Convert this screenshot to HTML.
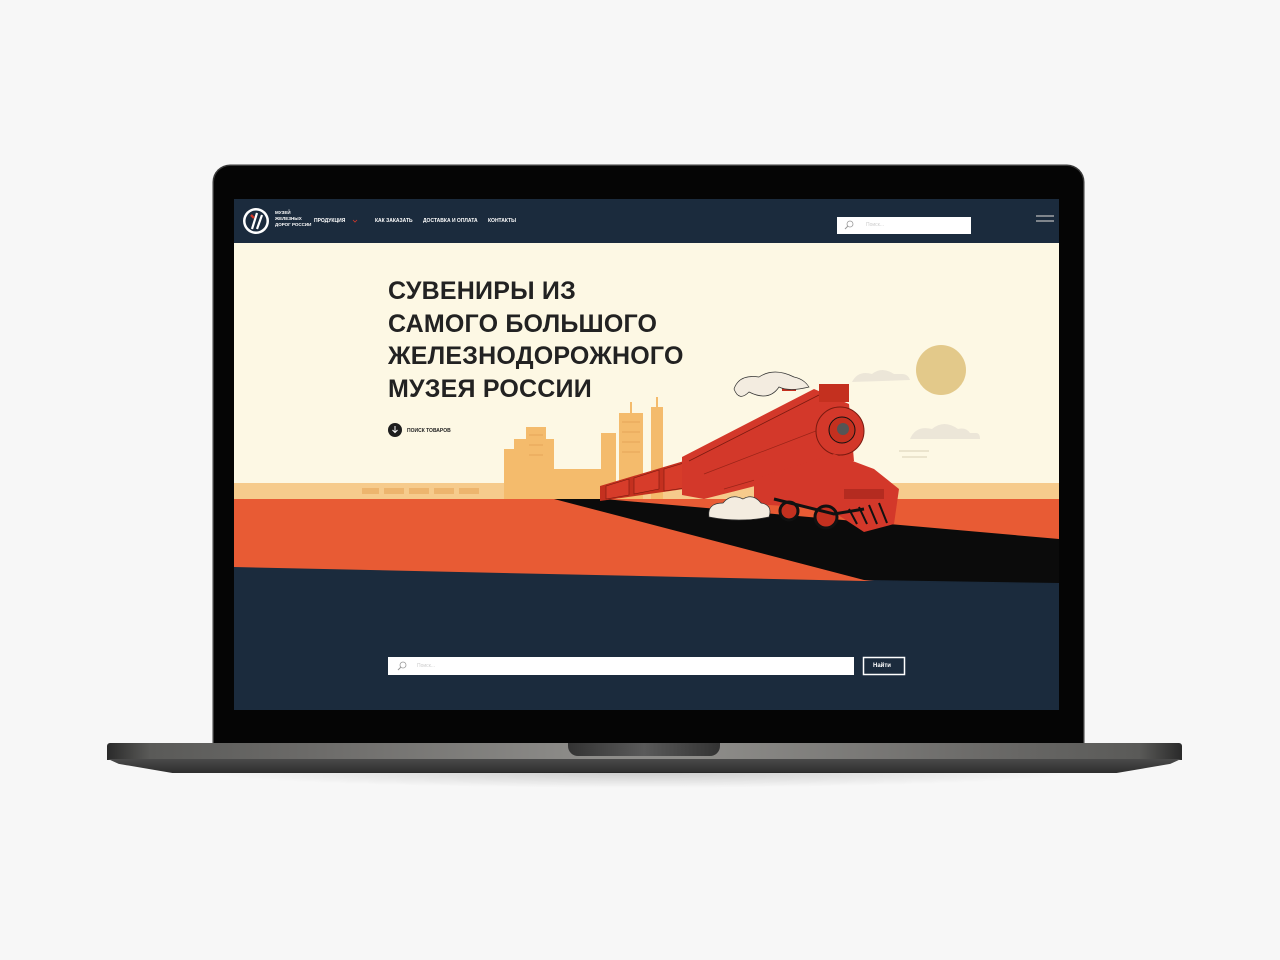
<!DOCTYPE html>
<html><head><meta charset="utf-8"><style>
body{margin:0;width:1280px;height:960px;background:#f7f7f7;position:relative;overflow:hidden;font-family:"Liberation Sans","DejaVu Sans",sans-serif}
.lid{position:absolute;left:214px;top:166px;width:869px;height:578px;background:#050505;border-radius:16px 16px 0 0;box-shadow:0 0 0 1.5px #3a3a3a}
.screen{position:absolute;left:234px;top:199px;width:825px;height:511px;background:#1b2b3d;overflow:hidden}
.nav{position:absolute;left:0;top:0;width:825px;height:44px}
.nav span{position:absolute;top:19px;color:#fff;font-size:5px;font-weight:bold}
.base{position:absolute;left:107px;top:743px;width:1075px;height:17px;background:linear-gradient(90deg,#2a2a2a 0%,#5a5a58 4%,#6d6c6a 20%,#8e8d8a 45%,#8e8d8a 55%,#6d6c6a 80%,#5a5a58 96%,#2a2a2a 100%);border-radius:3px 3px 0 0}
.base2{position:absolute;left:108px;top:759px;width:1073px;height:14px;background:linear-gradient(#4a4a4a,#2e2e2e);clip-path:polygon(0 0,100% 0,99% 35%,94% 100%,6% 100%,1% 35%)}
.notch{position:absolute;left:568px;top:743px;width:152px;height:13px;background:linear-gradient(90deg,#333,#5a5a5a 50%,#333);border-radius:0 0 10px 10px}
.shadow{position:absolute;left:200px;top:772px;width:880px;height:16px;background:radial-gradient(ellipse at 50% 0,rgba(0,0,0,.18),rgba(0,0,0,0) 70%)}
h1{position:absolute;left:154px;top:76px;margin:0;font-size:25px;line-height:32.5px;color:#222;font-weight:900;letter-spacing:0.2px}
</style></head><body>
<div class="lid"></div>
<div class="screen">
<svg width="825" height="511" style="position:absolute;left:0;top:0">
<rect x="0" y="44" width="825" height="290" fill="#fdf8e4"/>
<rect x="0" y="284" width="825" height="16" fill="#f6cb8c"/>
<g fill="#edb56e"><rect x="128" y="289" width="17" height="6"/><rect x="150" y="289" width="20" height="6"/><rect x="175" y="289" width="20" height="6"/><rect x="200" y="289" width="20" height="6"/><rect x="225" y="289" width="20" height="6"/></g>
<g fill="#f4bb6c"><rect x="270" y="250" width="20" height="50"/><rect x="292" y="228" width="20" height="72"/><rect x="280" y="240" width="40" height="60"/><rect x="318" y="270" width="55" height="30"/><rect x="367" y="234" width="15" height="66"/><rect x="385" y="214" width="24" height="86"/><rect x="417" y="208" width="12" height="92"/><rect x="396" y="203" width="2" height="12"/><rect x="422" y="198" width="2" height="12"/></g>
<g fill="#e8a65a" opacity=".5"><rect x="295" y="235" width="14" height="2"/><rect x="295" y="245" width="14" height="2"/><rect x="295" y="255" width="14" height="2"/><rect x="388" y="222" width="18" height="2"/><rect x="388" y="232" width="18" height="2"/><rect x="388" y="242" width="18" height="2"/><rect x="388" y="252" width="18" height="2"/></g>
<path d="M0 300H825V363L630 382H0Z" fill="#e85b34"/>
<path d="M0 368L630 382L825 385V511H0Z" fill="#1b2b3d"/>
<path d="M320 300L370 300L825 340L825 384L630 381Z" fill="#0b0b0b"/>
<circle cx="707" cy="171" r="25" fill="#e3c98a"/>
<path d="M618 183q6-12 20-8q10-8 22 0h8q6 0 8 6z" fill="#ece6d8"/>
<path d="M676 240q6-14 22-10q12-10 26 0q8-2 12 4h6q4 0 4 6z" fill="#ece6d8"/>
<path d="M665 252h30M668 258h25" stroke="#d9cfb6" stroke-width="1"/>
<path d="M366 287L450 262L450 290L366 302Z" fill="#c4301f"/>
<path d="M372 287L395 280V296L372 300Z M400 279L425 271V290L400 295Z M430 270L450 264V289L430 292Z" fill="#d73c2a" stroke="#7a1a10" stroke-width=".6"/>
<path d="M455 260L500 248V292L455 296Z" fill="#c4301f" stroke="#7a1a10" stroke-width=".6"/>
<path d="M448 258L580 190L615 205L620 262L470 300L448 296Z" fill="#d3382a"/>
<path d="M455 262L585 196" stroke="#7a1a10" stroke-width=".8"/>
<path d="M470 275L600 225M490 290L610 255" stroke="#9a2418" stroke-width=".7"/>
<rect x="585" y="185" width="30" height="18" fill="#c4301f"/>
<rect x="548" y="180" width="14" height="12" fill="#c4301f"/>
<circle cx="606" cy="232" r="24" fill="#d3382a" stroke="#7a1a10" stroke-width="1"/>
<circle cx="608" cy="231" r="13" fill="#c4301f" stroke="#111" stroke-width="1"/>
<circle cx="609" cy="230" r="6" fill="#555"/>
<path d="M600 255L640 270L665 290L660 325L630 333L595 310L520 305L520 280Z" fill="#d3382a"/>
<path d="M610 290h40v10h-40z" fill="#b42b20"/>
<path d="M615 310l8 15M625 308l8 17M635 306l8 19M645 304l8 20" stroke="#111" stroke-width="2"/>
<circle cx="592" cy="318" r="11" fill="#c4301f" stroke="#111" stroke-width="3"/>
<circle cx="555" cy="312" r="9" fill="#c4301f" stroke="#111" stroke-width="3"/>
<path d="M540 300l60 15l30 -5" stroke="#111" stroke-width="3" fill="none"/>
<path d="M500 190q5-15 25-12q15-10 35 0q10 2 15 10q-20 5-30 0q-10 15-30 5q-10 10-15-3z" fill="#f3ece0" stroke="#333" stroke-width=".7"/>
<path d="M475 318q-2-14 14-14q8-10 20-4q10-6 18 4q12 2 8 14q-30 6-60 0z" fill="#f3ece0" stroke="#333" stroke-width=".7"/>
<circle cx="22" cy="22" r="13" fill="#fff"/><circle cx="22" cy="22" r="10.5" fill="#1b2b3d"/>
<path d="M18 30L23 14M23 30L28 16" stroke="#fff" stroke-width="2.2"/><path d="M17 16l3 3" stroke="#d3382a" stroke-width="2.5"/>
<rect x="603" y="18" width="134" height="17" fill="#fff"/>
<circle cx="616" cy="25" r="3" fill="none" stroke="#999" stroke-width=".8"/><path d="M614 27l-3 3" stroke="#999"/>
<path d="M802 17h18M802 22h18" stroke="#bbb" stroke-width="1.2"/>
<path d="M119 21l2 2l2-2" stroke="#d3382a" stroke-width=".8" fill="none"/>
<circle cx="161" cy="231" r="7" fill="#1e1e1e"/><path d="M161 227v6M158.5 231l2.5 2.5l2.5-2.5" stroke="#fff" stroke-width="1" fill="none"/>
<rect x="154" y="458" width="466" height="18" fill="#fff"/>
<circle cx="169" cy="466" r="3" fill="none" stroke="#999" stroke-width=".8"/><path d="M167 468l-3 3" stroke="#999"/>
<rect x="629.5" y="458.5" width="41" height="17" fill="none" stroke="#fff" stroke-width="1.5"/>
</svg>
<div class="nav">
<span style="left:41px;top:11px;font-size:4.5px;line-height:6px">МУЗЕЙ<br>ЖЕЛЕЗНЫХ<br>ДОРОГ РОССИИ</span>
<span style="left:80px">ПРОДУКЦИЯ</span>
<span style="left:141px">КАК ЗАКАЗАТЬ</span>
<span style="left:189px">ДОСТАВКА И ОПЛАТА</span>
<span style="left:254px">КОНТАКТЫ</span>
<span style="left:632px;top:23px;color:#ccc;font-weight:normal">Поиск...</span>
</div>
<h1>СУВЕНИРЫ ИЗ<br>САМОГО БОЛЬШОГО<br>ЖЕЛЕЗНОДОРОЖНОГО<br>МУЗЕЯ РОССИИ</h1>
<div style="position:absolute;left:173px;top:229px;font-size:5px;font-weight:bold;color:#222">ПОИСК ТОВАРОВ</div>
<div style="position:absolute;left:183px;top:464px;font-size:5px;color:#ccc">Поиск...</div>
<div style="position:absolute;left:639px;top:464px;font-size:6px;font-weight:bold;color:#fff">Найти</div>
</div>
<div class="base"></div><div class="base2"></div><div class="notch"></div><div class="shadow"></div>
</body></html>
